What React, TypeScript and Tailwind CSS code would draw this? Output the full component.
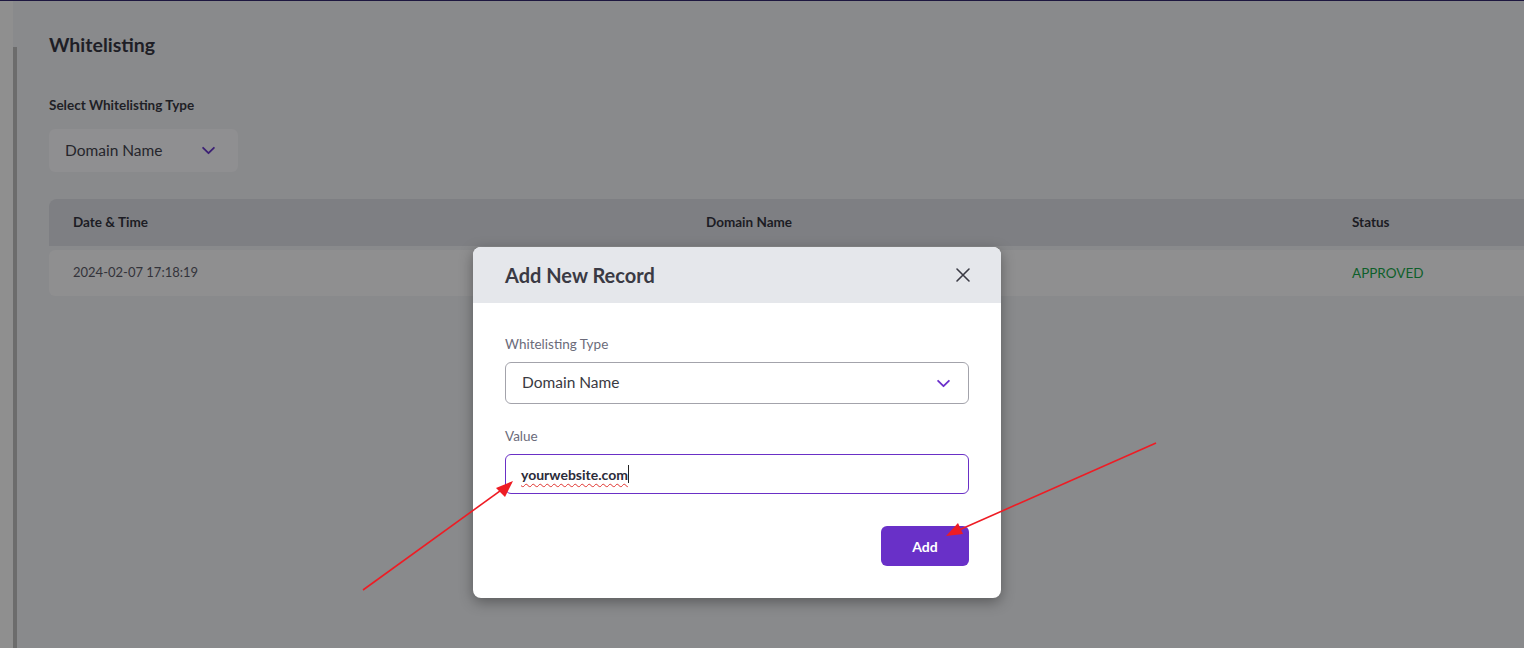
import React from "react";

const font = { fontFamily: "Lato, 'Open Sans', 'Liberation Sans', sans-serif" };

function Chevron({ className }: { className?: string }) {
  return (
    <svg className={className} viewBox="0 0 16 10" fill="none" stroke="currentColor" strokeWidth="2" strokeLinecap="round" strokeLinejoin="round">
      <path d="M2 2l6 6 6-6" />
    </svg>
  );
}

export default function App() {
  return (
    <div className="relative h-[648px] w-full overflow-hidden bg-[#898a8c] border-t border-[#1d1740]" style={font}>
      <div className="flex h-full">
        <div className="w-[13px] bg-[#8f8f8f]" />
        <div className="w-[4px] mt-[46px] bg-[#6c6c6c]" />
        <main className="flex-1 pl-[32px] pt-[32px]">
          <h1 className="text-[19.5px] leading-[24px] font-bold text-[#1e1e26]">Whitelisting</h1>
          <div className="mt-[39px] text-[13.5px] leading-[18px] font-bold text-[#1f1f26]">Select Whitelisting Type</div>
          <div className="mt-[15px] flex h-[43px] w-[189px] items-center justify-between rounded-[6px] bg-[#8f8f91] pl-[16px] pr-[22px]">
            <span className="text-[15.5px] text-[#26262c]">Domain Name</span>
            <Chevron className="h-[9px] w-[15px] text-[#3b1f74]" />
          </div>
          <div className="mt-[27px]">
            <div className="flex h-[47px] items-center rounded-tl-[8px] bg-[#7e7f83] text-[13.5px] font-bold text-[#1c1c24]">
              <div className="w-[657px] pl-[24px]">Date &amp; Time</div>
              <div className="w-[646px]">Domain Name</div>
              <div>Status</div>
            </div>
            <div className="mt-[4px] flex h-[46px] items-center rounded-l-[6px] bg-[#8f8f90] text-[13px] text-[#33333a]">
              <div className="w-[657px] pl-[24px]">2024-02-07 17:18:19</div>
              <div className="w-[646px]" />
              <div className="text-[13.5px] text-[#0e5f2a]">APPROVED</div>
            </div>
          </div>
        </main>
      </div>

      <div className="absolute left-[473px] top-[246px] w-[528px] overflow-hidden rounded-[8px] bg-white shadow-[0_4px_14px_rgba(0,0,0,0.35)]">
        <div className="flex h-[56px] items-center justify-between bg-[#e5e7eb] pl-[32px] pr-[30px]">
          <span className="text-[20px] font-bold text-[#3a3a44]">Add New Record</span>
          <svg className="h-[16px] w-[16px] text-[#3a3a44]" viewBox="0 0 16 16" fill="none" stroke="currentColor" strokeWidth="1.6" strokeLinecap="round">
            <path d="M2 2l12 12M14 2L2 14" />
          </svg>
        </div>
        <div className="px-[32px] pt-[31px] pb-[32px]">
          <div className="text-[13.5px] leading-[20px] text-[#6b6b7a]">Whitelisting Type</div>
          <div className="mt-[8px] flex h-[42px] items-center justify-between rounded-[6px] border border-[#a3a3ab] pl-[16px] pr-[17px]">
            <span className="text-[15.5px] text-[#3a3a42]">Domain Name</span>
            <Chevron className="h-[9px] w-[15px] text-[#6b2fcb]" />
          </div>
          <div className="mt-[22px] text-[13.5px] leading-[20px] text-[#6b6b7a]">Value</div>
          <div className="mt-[8px] flex h-[40px] items-center rounded-[6px] border border-[#6a30c6] pl-[15px]">
            <span className="text-[14px] font-bold text-[#2c2c3a] underline decoration-wavy decoration-[#e0332f] decoration-1 underline-offset-[3px]">yourwebsite.com</span>
            <span className="ml-[0px] h-[18px] w-[1px] bg-[#222]" />
          </div>
          <div className="mt-[32px] flex justify-end">
            <button className="h-[40px] w-[88px] rounded-[6px] bg-[#6930c8] text-[14px] font-bold text-white">Add</button>
          </div>
        </div>
      </div>

      <svg className="pointer-events-none absolute inset-0 h-[648px] w-[1524px]" viewBox="0 0 1524 648">
        <line x1="363" y1="589" x2="511" y2="482" stroke="#ee1c24" strokeWidth="1.6" />
        <path d="M513 480L496 487L505 496z" fill="#ee1c24" />
        <line x1="1156" y1="442" x2="950" y2="533" stroke="#ee1c24" strokeWidth="1.6" />
        <path d="M946 535L958 522L963 533z" fill="#ee1c24" />
      </svg>
    </div>
  );
}
